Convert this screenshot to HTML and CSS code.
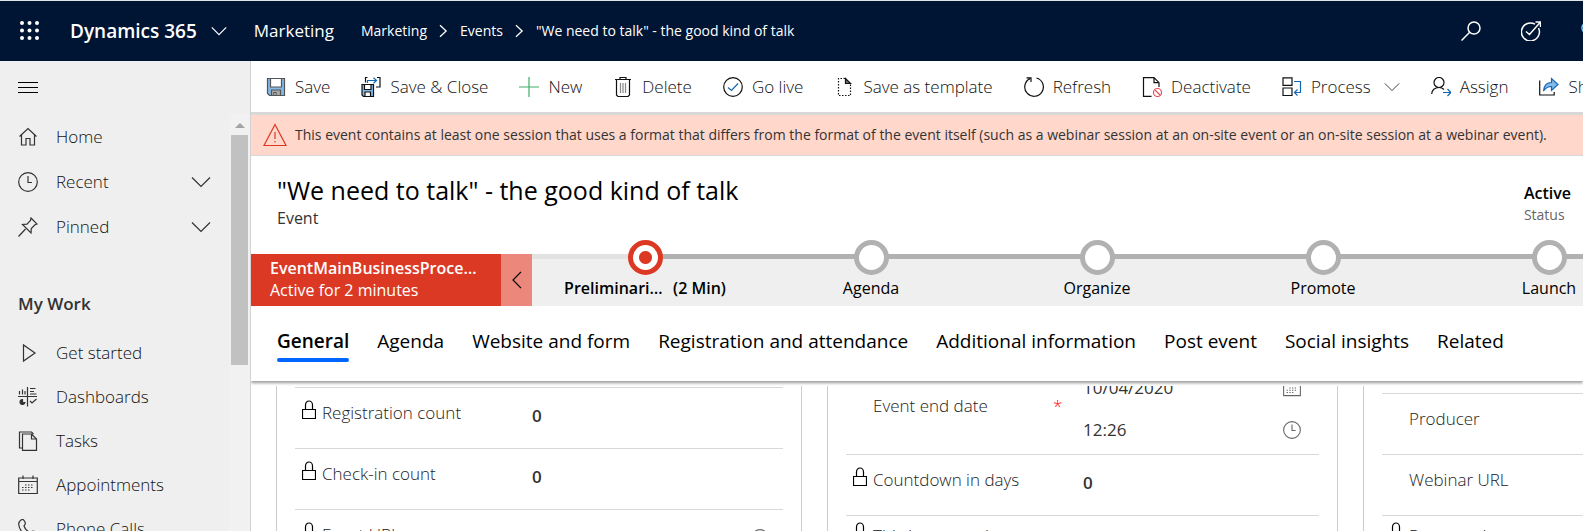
FILE: index.html
```html
<!DOCTYPE html>
<html lang="en">
<head>
<meta charset="utf-8">
<title>Event: "We need to talk" - Dynamics 365</title>
<link rel="stylesheet" href="styles.css">
</head>
<body>

<!-- Shared icons -->
<svg class="sprite" aria-hidden="true">
  <symbol id="chev" viewBox="0 0 20 12"><path d="M1 1.500l9 9 9-9"/></symbol>
  <symbol id="chev-right" viewBox="0 0 10 16"><path d="M1 1.500l7 6.500-7 6.500"/></symbol>
  <symbol id="clock" viewBox="0 0 20 20"><circle cx="10" cy="10" r="9.300"/><path d="M10 4v6.500h4"/></symbol>
  <symbol id="lock" viewBox="0 0 14 20"><path d="M.5 9.500h13v9H.5zM3.500 9.500V5a3.500 4 0 0 1 7 0v4.500"/></symbol>
  <symbol id="calendar" viewBox="0 0 20 20"><path d="M.7 3h18.600v15.500H.7zM.7 6.500h18.600M5 .5V4M15 .5V4"/><path stroke-dasharray="1.500 1.500" d="M7 10h9M4 12.500h12M4 15h9"/></symbol>
</svg>

<!-- Top bar -->
<header class="topbar">
  <button class="icon-btn" aria-label="App launcher">
    <svg class="waffle" viewBox="0 0 20 20"><circle cx="2" cy="2" r="2"/><circle cx="9.500" cy="2" r="2"/><circle cx="17" cy="2" r="2"/><circle cx="2" cy="9.500" r="2"/><circle cx="9.500" cy="9.500" r="2"/><circle cx="17" cy="9.500" r="2"/><circle cx="2" cy="17" r="2"/><circle cx="9.500" cy="17" r="2"/><circle cx="17" cy="17" r="2"/></svg>
  </button>
  <button class="brand">Dynamics 365 <svg class="chev-sm"><use href="#chev"/></svg></button>
  <a href="#" class="area">Marketing</a>
  <nav class="breadcrumb">
    <a href="#">Marketing</a>
    <svg class="sep"><use href="#chev-right"/></svg>
    <a href="#">Events</a>
    <svg class="sep"><use href="#chev-right"/></svg>
    <a href="#">"We need to talk" - the good kind of talk</a>
  </nav>
  <div class="top-actions">
    <button class="icon-btn" aria-label="Search"><svg class="icon" viewBox="0 0 20 20"><circle cx="13" cy="7" r="6"/><path d="M8.700 11.300L.5 19.500"/></svg></button>
    <button class="icon-btn" aria-label="Task flow"><svg class="icon" viewBox="0 0 20 20"><path d="M14 3.200A9 9 0 1 0 17.500 7M5 10.500l3.500 3L19.500 1M14.500 1h5v5"/></svg></button>
    <button class="icon-btn bulb" aria-label="Assistant"><svg class="icon" viewBox="0 0 20 20"><circle cx="7" cy="7" r="6"/><path d="M5 13v5h4v-5"/></svg></button>
  </div>
</header>

<div class="shell">

  <!-- Site map -->
  <aside class="sidebar">
    <button class="icon-btn burger" aria-label="Expand menu"><svg class="icon" viewBox="0 0 20 20"><path d="M0 4.500h20M0 9.500h20M0 14.500h20"/></svg></button>
    <div class="nav-wrap">
      <nav class="nav">
        <div class="nav-group">
          <a href="#" class="nav-item"><svg class="icon" viewBox="0 0 20 20"><path d="M1.500 9.500L10 1.500l8.500 8M3.500 8v10h4.500v-6.500h4V18h4.500V8"/></svg>Home</a>
          <a href="#" class="nav-item"><svg class="icon"><use href="#clock"/></svg>Recent<svg class="chev"><use href="#chev"/></svg></a>
          <a href="#" class="nav-item"><svg class="icon" viewBox="0 0 20 20"><path d="M13 1l6 6-2 .8-3.700 3.700-.3 4.500-8.500-8.500L9 7.200l3.500-3.700zM7.500 12L.5 19.500"/></svg>Pinned<svg class="chev"><use href="#chev"/></svg></a>
        </div>
        <h2 class="nav-title">My Work</h2>
        <a href="#" class="nav-item"><svg class="icon" viewBox="0 0 20 20"><path d="M5.500 2v16L17 10z"/></svg>Get started</a>
        <a href="#" class="nav-item"><svg class="icon" viewBox="0 0 20 20"><path d="M9.500 0v19.500M0 9.500h19M1.500 4v3.500M4.500 2.500v5M7 4v3.500M12 1.500h5.500M12 4.500h4M12 7h6.500M12 14l2 2 4.500-4"/><path d="M4.500 12.500a2.500 2.500 0 1 0 2.500 3H4.500z" fill="currentColor"/></svg>Dashboards</a>
        <a href="#" class="nav-item"><svg class="icon" viewBox="0 0 20 20"><path d="M4.500 17H1.500V1h12l2 2M4.500 3h9l5 5v11.300h-14zM13.500 3v5h5"/></svg>Tasks</a>
        <a href="#" class="nav-item"><svg class="icon"><use href="#calendar"/></svg>Appointments</a>
        <a href="#" class="nav-item"><svg class="icon" viewBox="0 0 20 20"><path d="M3 1c2-1.500 3 0 4 2s.5 2.500-1 4c1 3 3.500 5.500 6.500 6.500 1.500-1.500 2.500-2 4-1s3.500 2 2 4-4 3-7 2C6 16.500 1.500 11 .8 6 .5 3.500 1.500 2 3 1z"/></svg>Phone Calls</a>
      </nav>
      <div class="scrollbar"><i class="arrow-up"></i><i class="thumb"></i></div>
    </div>
  </aside>

  <main class="content">

    <!-- Command bar -->
    <div class="commands">
      <button><svg class="icon" viewBox="0 0 20 20"><path d="M1.500 1.500h17v17h-15l-2-2z" fill="#83b9e6" stroke="#555"/><path d="M4.500 1.500h11v8.500h-11z" fill="#fff" stroke="#555"/><path d="M5.500 13h9v5.500h-9z" fill="#a9a9a9" stroke="#555"/><path d="M8 15.500h2v3H8z" fill="#fff" stroke="#555"/></svg>Save</button>
      <button><svg class="icon" viewBox="0 0 20 20"><path d="M1 7.500h11.500v12H2.500L1 18z" fill="#83b9e6"/><path d="M3.500 7.500h6.500v5H3.500z" fill="#fff"/><path d="M4 15h5.500v4.500H4z" fill="#fff"/><path d="M4.500 5.500v-5h2M16 .5h3v9.500h-4"/><path d="M6.500 6V3.500H15M12.500.8l3 2.700-3 2.700" stroke="#1167b7"/></svg>Save &amp; Close</button>
      <button><svg class="icon" viewBox="0 0 20 20"><path d="M10 0v20M0 10h20" stroke="#3fae6b"/></svg>New</button>
      <button><svg class="icon" viewBox="0 0 20 20"><path d="M2 2.500h16M7 2.500v-2h6v2M3.500 2.500v15.500l1.500 1.500h10l1.500-1.500V2.500"/><path d="M7.500 6v10M10 6v10M12.500 6v10" stroke="#888"/></svg>Delete</button>
      <button><svg class="icon" viewBox="0 0 20 20"><circle cx="10" cy="10" r="9.300"/><path d="M5 10.500l3.500 3L15 6.500" stroke="#1167b7"/></svg>Go live</button>
      <button><svg class="icon" viewBox="0 0 20 20"><path stroke-dasharray="1.500 1.500" d="M11 1.500H4.500v17h12V7"/><path d="M11.500 1.500V6.500h5z" fill="#777"/></svg>Save as template</button>
      <button><svg class="icon" viewBox="0 0 20 20"><path d="M12.500 1A9.300 9.300 0 1 1 6 1.600M2.500.8h4.500V5"/></svg>Refresh</button>
      <button><svg class="icon" viewBox="0 0 20 20"><path d="M9.500 19.300H1.500V.7H12l5 5V10M12 .7v5h5"/><circle cx="15.500" cy="15.500" r="4" stroke="#e8505b"/><path d="M13 13l5 5" stroke="#e8505b"/></svg>Deactivate</button>
      <button><svg class="icon" viewBox="0 0 20 20"><path d="M1 .8h9v7.500H1zM1 11h9v7.500H1z"/><path d="M12 4.500h6.500v11H12.500M15.500 12.500l-3 3 3 3" stroke="#1167b7"/></svg>Process <svg class="chev-sm"><use href="#chev"/></svg></button>
      <button><svg class="icon" viewBox="0 0 20 20"><circle cx="8" cy="5.500" r="5"/><path d="M.7 17c0-4 3.300-6.500 7.300-6.500 2 0 3.500.5 5 2"/><path d="M12 15.500h7.500M16.500 12l3.300 3.500-3.300 3.500" stroke="#1167b7"/></svg>Assign</button>
      <button><svg class="icon" viewBox="0 0 20 20"><path d="M.7 3.500v14.500h14.500v-3"/><path d="M4.500 14c.5-6 3.500-8.500 8-8.500v-4l6.500 6-6.500 6V9.500c-3.500 0-6 1.500-8 4.500z" fill="#83b9e6" stroke="#1167b7"/></svg>Share</button>
    </div>

    <div class="notice" role="alert">
      <svg class="warn" viewBox="0 0 24 24"><path d="M12 1.500l11 21H1zM12 9v7M12 18v1.500"/></svg>
      This event contains at least one session that uses a format that differs from the format of the event itself (such as a webinar session at an on-site event or an on-site session at a webinar event).
    </div>

    <!-- Record header -->
    <div class="record">
      <div>
        <h1>"We need to talk" - the good kind of talk</h1>
        <div class="entity">Event</div>
      </div>
      <div class="status">
        <b>Active</b>
        <span>Status</span>
      </div>
    </div>

    <!-- Business process flow -->
    <div class="process">
      <div class="process-name">
        <b>EventMainBusinessProcessFlow</b>
        <span>Active for 2 minutes</span>
      </div>
      <button class="process-prev" aria-label="Previous stage"><svg viewBox="0 0 10 18"><path d="M9 .8L1 9l8 8.200"/></svg></button>
      <ol class="stages">
        <li class="current"><i class="dot"></i><span class="clip">Preliminaries</span><span>(2 Min)</span></li>
        <li><i class="dot"></i>Agenda</li>
        <li><i class="dot"></i>Organize</li>
        <li><i class="dot"></i>Promote</li>
        <li><i class="dot"></i>Launch</li>
      </ol>
    </div>

    <nav class="tabs">
      <a href="#" class="active">General</a>
      <a href="#">Agenda</a>
      <a href="#">Website and form</a>
      <a href="#">Registration and attendance</a>
      <a href="#">Additional information</a>
      <a href="#">Post event</a>
      <a href="#">Social insights</a>
      <a href="#">Related</a>
    </nav>

    <!-- Form, scrolled part way down -->
    <div class="form-scroll">
      <form class="form">
        <section class="card">
          <div class="field spacer"></div>
          <div class="field"><svg class="lock"><use href="#lock"/></svg><label for="regcount">Registration count</label><input id="regcount" value="0" readonly></div>
          <div class="field"><svg class="lock"><use href="#lock"/></svg><label for="checkin">Check-in count</label><input id="checkin" value="0" readonly></div>
          <div class="field"><svg class="lock"><use href="#lock"/></svg><label for="url">Event URL</label><input id="url" readonly><svg class="field-icon"><use href="#clock"/></svg></div>
        </section>

        <section class="card">
          <div class="field date-field">
            <label for="enddate">Event end date</label><span class="required">*</span>
            <div class="date-inputs">
              <div><input id="enddate" value="10/04/2020"><svg class="field-icon"><use href="#calendar"/></svg></div>
              <div><input value="12:26" aria-label="Event end time"><svg class="field-icon"><use href="#clock"/></svg></div>
            </div>
          </div>
          <div class="field"><svg class="lock"><use href="#lock"/></svg><label for="countdown">Countdown in days</label><input id="countdown" value="0" readonly></div>
          <div class="field tight"><svg class="lock"><use href="#lock"/></svg><label for="recurring">This is a recurring</label><input id="recurring" readonly></div>
        </section>

        <section class="card third">
          <div class="field spacer"></div>
          <div class="field"><label for="producer">Producer</label><input id="producer"></div>
          <div class="field"><label for="webinar">Webinar URL</label><input id="webinar"></div>
          <div class="field tight"><svg class="lock"><use href="#lock"/></svg><label for="presentation">Presentation</label><input id="presentation" readonly></div>
        </section>
      </form>
    </div>
  </main>
</div>

</body>
</html>
```

FILE: styles.css
```css
* {
  box-sizing: border-box;
}

body {
  margin: 0;
  height: 100vh;
  display: flex;
  flex-direction: column;
  overflow: hidden;
  font-family: "Open Sans", "Noto Sans", sans-serif;
  font-size: 17px;
  line-height: 24px;
  color: #333;
  background-color: #fff;
}

a {
  color: inherit;
  text-decoration: none;
}

button {
  border: 0;
  padding: 0;
  background: none;
  font: inherit;
  color: inherit;
  white-space: nowrap;
}

svg {
  flex: none;
  fill: none;
  stroke: currentColor;
  stroke-width: 1.2;
}

.sprite {
  display: none;
}

.icon {
  width: 20px;
  height: 20px;
}

.icon-btn {
  display: flex;
}

.chev {
  width: 20px;
  height: 12px;
}

.chev-sm {
  width: 16px;
  height: 10px;
}

/* Top bar */
.topbar {
  height: 61px;
  flex: none;
  display: flex;
  align-items: center;
  border-top: 1px solid #dfe6e6;
  padding-left: 20px;
  background-color: #001433;
  color: #fff;
  white-space: nowrap;
}

.topbar svg {
  stroke-width: 1.5;
}

.topbar .waffle {
  width: 20px;
  height: 20px;
  fill: #fff;
  stroke: none;
}

.brand {
  display: flex;
  align-items: center;
  gap: 14px;
  margin-left: 30px;
  font-size: 19px;
  font-weight: 600;
}

.area {
  margin-left: 27px;
  font-size: 17px;
}

.breadcrumb {
  display: flex;
  align-items: center;
  gap: 12px;
  margin-left: 27px;
  font-size: 14px;
  font-weight: 500;
}

.sep {
  width: 9px;
  height: 14px;
}

.top-actions {
  display: flex;
  gap: 40px;
  margin-left: auto;
}

.bulb {
  margin-right: -18px;
  color: #7cc7f2;
}

.shell {
  flex: 1;
  min-height: 0;
  display: flex;
}

/* Site map */
.sidebar {
  width: 251px;
  flex: none;
  display: flex;
  flex-direction: column;
  border-right: 1px solid #d2d2d2;
  background-color: #efefef;
}

.burger {
  height: 53px;
  flex: none;
  align-items: center;
  padding-left: 18px;
  color: #000;
}

.nav-wrap {
  flex: 1;
  min-height: 0;
  display: flex;
}

.nav {
  flex: 1;
  overflow: hidden;
  font-weight: 300;
  color: #111;
}

.nav-group {
  display: flex;
  flex-direction: column;
  gap: 1px;
  padding-top: 1px;
}

.nav-item {
  height: 44px;
  display: flex;
  align-items: center;
  gap: 18px;
  padding: 0 18px;
}

.nav-item svg {
  color: #333;
}

.nav-item .chev {
  margin-left: auto;
}

.nav-title {
  margin: 0;
  padding: 43px 18px 15px;
  font-size: 17px;
  font-weight: 600;
  line-height: 24px;
  color: #333;
}

.scrollbar {
  width: 21px;
  display: flex;
  flex-direction: column;
  align-items: center;
  background-color: #f1f1f1;
}

.arrow-up {
  margin: 9px 0 7px;
  border: 5px solid transparent;
  border-top: 0;
  border-bottom-color: #a3a3a3;
}

.thumb {
  width: 17px;
  height: 230px;
  background-color: #c1c1c1;
}

.content {
  flex: 1;
  min-width: 0;
  display: flex;
  flex-direction: column;
  overflow: hidden;
}

/* Command bar */
.commands {
  height: 54px;
  flex: none;
  display: flex;
  border-bottom: 3px solid #d8d8d8;
  font-weight: 300;
  color: #111;
  overflow: hidden;
}

.commands button {
  display: flex;
  align-items: center;
  gap: 9px;
  padding: 0 16px 0 15px;
}

.commands .chev-sm {
  margin-left: 4px;
  stroke-width: 1;
}

.notice {
  height: 41px;
  flex: none;
  display: flex;
  align-items: center;
  gap: 8px;
  padding-left: 12px;
  border-bottom: 1px solid #d8d8d8;
  background-color: #ffd7cb;
  font-size: 14px;
  white-space: nowrap;
}

.warn {
  width: 24px;
  height: 24px;
  color: #dc3925;
}

/* Record header */
.record {
  height: 98px;
  flex: none;
  display: flex;
  justify-content: space-between;
  padding: 18px 12px 0 26px;
}

h1 {
  margin: 0;
  font-size: 25px;
  font-weight: 500;
  line-height: 32px;
  color: #000;
}

.entity {
  font-size: 16px;
}

.status {
  display: flex;
  flex-direction: column;
  padding-top: 8px;
  font-size: 16px;
  line-height: 22px;
}

.status b {
  font-weight: 600;
  color: #000;
}

.status span {
  font-size: 14px;
  color: #666;
}

/* Business process flow */
.process {
  height: 52px;
  flex: none;
  display: flex;
  background-color: #efefef;
}

.process-name {
  width: 250px;
  flex: none;
  padding: 3px 19px;
  background-color: #dc3925;
  color: #fff;
  font-size: 16px;
  line-height: 22px;
}

.process-name b {
  display: block;
  overflow: hidden;
  text-overflow: ellipsis;
  font-weight: 600;
}

.process-prev {
  width: 31px;
  flex: none;
  display: flex;
  align-items: center;
  justify-content: center;
  background-color: #eb887b;
  color: #000;
}

.process-prev svg {
  width: 10px;
  height: 18px;
}

.stages {
  display: flex;
  margin: 0;
  padding: 0;
  list-style: none;
  color: #000;
  font-size: 16px;
}

.stages li {
  width: 226px;
  flex: none;
  display: flex;
  justify-content: center;
  gap: 9px;
  position: relative;
  padding-top: 17px;
  border-top: 5px solid #b1b1b1;
}

.stages .current {
  border-image: linear-gradient(to right, #e2e2e2 50%, #b1b1b1 50%) 5;
  font-weight: 600;
}

/* stage marker, sits over the line */
.dot {
  position: absolute;
  top: -19px;
  left: calc(50% - 17px);
  width: 35px;
  height: 35px;
  border: 5px solid #b1b1b1;
  border-radius: 50%;
  background-color: #fff;
}

.current .dot {
  border-color: #dc3925;
  background: radial-gradient(circle, #dc3925 6px, #fff 7px);
}

.clip {
  width: 100px;
  overflow: hidden;
  text-overflow: ellipsis;
}

/* Tabs */
.tabs {
  height: 75px;
  flex: none;
  display: flex;
  align-items: flex-start;
  gap: 28px;
  padding: 20px 26px 0;
  position: relative;
  box-shadow: 0 2px 3px #999;
  clip-path: inset(0 0 -5px 0);
  background-color: #fff;
  color: #000;
  font-size: 19px;
  line-height: 30px;
  white-space: nowrap;
}

.tabs .active {
  font-weight: 600;
}

.tabs .active::after {
  content: "";
  display: block;
  height: 4px;
  margin-top: 2px;
  border-radius: 2px;
  background-color: #0066ff;
}

/* Form */
.form-scroll {
  flex: 1;
  min-height: 0;
  margin-top: 5px;
  overflow: hidden;
}

.form {
  display: grid;
  grid-template-columns: 526px 511px 511px;
  gap: 25px;
  margin-top: -60px;
  padding-left: 25px;
}

.card {
  padding: 0 18px;
  border: 1px solid #ccc;
}

.card.third {
  padding-top: 6px;
}

.field {
  height: 61px;
  display: flex;
  align-items: flex-start;
  position: relative;
  padding: 13px 0 0 27px;
  border-bottom: 1px solid #d8d8d8;
  color: #222;
  font-weight: 300;
}

.field label {
  width: 210px;
  flex: none;
  white-space: nowrap;
}

.field input {
  flex: 1;
  min-width: 0;
  height: 24px;
  margin-top: 3px;
  padding: 0;
  border: 0;
  outline: 0;
  background: none;
  font: inherit;
  font-weight: 600;
  color: #333;
}

/* icon in the gutter left of the label */
.lock {
  position: absolute;
  top: 12px;
  left: 7px;
  width: 14px;
  height: 20px;
  color: #000;
}

.field-icon {
  width: 18px;
  height: 18px;
  margin: 6px 14px 0 0;
  color: #666;
}

.tight {
  padding-top: 8px;
}

.tight .lock {
  top: 6px;
}

.date-field {
  height: 128px;
  padding-top: 67px;
}

.date-field label {
  width: 180px;
}

.required {
  width: 30px;
  flex: none;
  color: #f00;
}

.date-inputs {
  flex: 1;
  min-width: 0;
  margin-top: -27px;
}

.date-inputs div {
  height: 42px;
  display: flex;
  align-items: center;
}

.date-inputs input {
  margin-top: 0;
  font-weight: 400;
}

.date-inputs .field-icon {
  margin: 0 18px 0 0;
}
```
